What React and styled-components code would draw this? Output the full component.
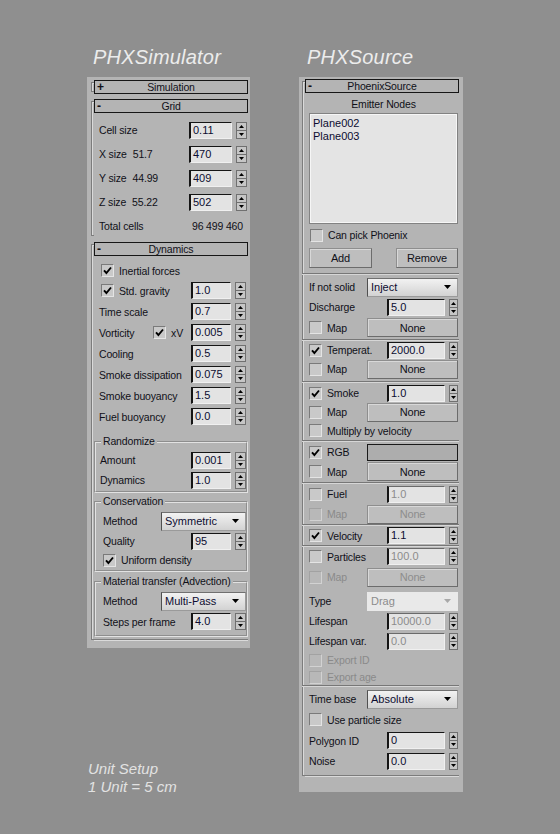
import React from 'react';
import styled, {createGlobalStyle, css} from 'styled-components';

const GlobalStyle = createGlobalStyle`
    html, body {
        margin: 0;
        padding: 0;
        background: #8f8f8f;
    }
    body {
        font-family: "Liberation Sans", Arial, sans-serif;
        font-size: 10.5px;
        letter-spacing: -0.15px;
        color: #101018;
    }
    * { box-sizing: border-box; }
`;

const Page = styled.div`
    display: flex;
    align-items: flex-start;
    gap: 49px;
    padding: 45px 0 0 87px;
    min-height: 834px;
`;

const Column = styled.div`
    display: flex;
    flex-direction: column;
    width: ${props => props.$w}px;
`;

const Title = styled.div`
    font-style: italic;
    font-size: 20px;
    line-height: 24px;
    height: 24px;
    letter-spacing: 0.2px;
    color: #ececec;
    padding-left: ${props => props.$indent}px;
    margin-bottom: 8px;
`;

const Panel = styled.div`
    background: #b4b4b4;
    padding: ${props => props.$pad};
    display: flex;
    flex-direction: column;
`;

const Rollout = styled.div`
    display: grid;
    grid-template-columns: 3px 1fr;
    margin-top: ${props => props.$mt || 0}px;
`;

const Bracket = styled.div`
    grid-column: 1;
    grid-row: 1 / span 2;
    margin-top: 2px;
    margin-bottom: ${props => props.$short ? 2 : 0}px;
    border: 1px solid #7c7c7c;
    border-right: none;
    box-shadow: inset 1px 1px 0 #dadada;
`;

const RollHeader = styled.div`
    grid-column: 2;
    grid-row: 1;
    height: 14px;
    border: 1px solid #161616;
    display: grid;
    grid-template-columns: 14px 1fr 14px;
    align-items: center;
    line-height: 12px;
`;

const Sign = styled.span`
    padding-left: 2px;
    font-weight: bold;
    font-size: 12px;
`;

const HeaderText = styled.span`
    text-align: center;
`;

const RollBody = styled.div`
    grid-column: 2;
    grid-row: 2;
    padding: ${props => props.$pad};
    display: flex;
    flex-direction: column;
    ${props => props.$closed && css`
        border-bottom: 1px solid #7c7c7c;
        box-shadow: 0 1px 0 #dadada;
    `}
`;

const Row = styled.div`
    display: flex;
    align-items: center;
    height: ${props => props.$h || 20}px;
    margin-top: ${props => props.$mt || 0}px;
    padding: 0 ${props => props.$pr || 0}px 0 ${props => props.$pl || 0}px;
    justify-content: ${props => props.$center ? 'center' : props.$between ? 'space-between' : 'flex-start'};
    white-space: nowrap;
`;

const Label = styled.span`
    color: ${props => props.$off ? '#8a8a8a' : '#101018'};
    margin-right: ${props => props.$fill ? 'auto' : '0'};
`;

const Sub = styled.span`
    margin-left: 6px;
`;

const Value = styled.span`
    margin-right: 4px;
`;

const Box = styled.span`
    width: 13px;
    height: 13px;
    flex: none;
    border: 1px solid;
    border-color: ${props => props.$off ? '#a2a2a2 #d2d2d2 #d2d2d2 #a2a2a2' : '#7a7a7a #e4e4e4 #e4e4e4 #7a7a7a'};
    background: ${props => props.$off ? '#b8b8b8' : '#c9c9c9'};
    display: inline-flex;
    align-items: center;
    justify-content: center;
    margin-right: 5px;
`;

const NumBox = styled.div`
    width: ${props => props.$w}px;
    height: 17px;
    background: #e3e3e3;
    border-style: solid;
    border-width: 1px 1px 1px 2px;
    border-color: ${props => props.$off ? '#6a6a6a' : '#151515'} #f0f0f0 #f0f0f0 #151515;
    padding-left: 2px;
    line-height: 15px;
    font-size: 11px;
    letter-spacing: 0;
    color: ${props => props.$off ? '#8c8c8c' : '#0c0c30'};
`;

const Spin = styled.div`
    width: ${props => props.$w}px;
    height: 17px;
    margin-left: ${props => props.$gap}px;
    display: flex;
    flex-direction: column;
    border: 1px solid #707070;
    background: #c6c6c6;
`;

const SpinHalf = styled.div`
    flex: 1;
    display: flex;
    align-items: center;
    justify-content: center;
    & + & {
        border-top: 1px solid #707070;
    }
`;

const FieldWrap = styled.div`
    display: flex;
    align-items: center;
    margin-left: ${props => props.$ml || 0}px;
`;

const Drop = styled.div`
    width: ${props => props.$w}px;
    height: 19px;
    display: flex;
    align-items: center;
    justify-content: space-between;
    padding: 0 6px 0 3px;
    border: 1px solid;
    border-color: #707070 #9a9a9a #9a9a9a #505050;
    background: linear-gradient(#f2f2f2, #d2d2d2);
    font-size: 11px;
    letter-spacing: 0;
    color: #0c0c30;
    ${props => props.$off && css`
        background: #e9e9e9;
        border-color: #e9e9e9;
        color: #8c8c8c;
    `}
`;

const Btn = styled.div`
    width: ${props => props.$w}px;
    height: ${props => props.$h || 19}px;
    display: flex;
    align-items: center;
    justify-content: center;
    border: 1px solid;
    border-color: #8e8e8e #6c6c6c #6c6c6c #8e8e8e;
    background: #bebebe;
    box-shadow: inset 1px 1px 0 #d8d8d8;
    font-size: 11px;
    color: ${props => props.$off ? '#8d8d8d' : '#101018'};
`;

const Swatch = styled.div`
    width: 91px;
    height: 17px;
    border: 1px solid #1a1a1a;
    background: #adadad;
`;

const Group = styled.fieldset`
    margin: ${props => props.$mt}px 0 0 0;
    padding: ${props => props.$pt}px 0 ${props => props.$pb}px ${props => props.$pl}px;
    border: 2px groove #e2e2e2;
    min-width: 0;
`;

// legend sits inside the fieldset padding, so pull it back to a fixed x
const Legend = styled.legend`
    padding: 0 2px;
    margin-left: ${props => 5 - props.$pl}px;
    line-height: 13px;
    font-size: 10.5px;
`;

const ListBox = styled.div`
    width: 149px;
    height: 111px;
    background: #e4e4e4;
    border: 1px solid #828282;
    box-shadow: inset 0 0 0 1px #f6f6f6;
    padding: 3px 3px;
    font-size: 11px;
    line-height: 13px;
    letter-spacing: 0;
    color: #0c0c30;
`;

const Sep = styled.div`
    height: 2px;
    flex: none;
    margin: ${props => props.$mt || 0}px -1px 0 -7px;
    border-top: 1px solid #777777;
    border-bottom: 1px solid #d6d6d6;
`;

const UnitNote = styled.div`
    margin-top: 112px;
    padding-left: 1px;
    font-style: italic;
    font-size: 15px;
    line-height: 18px;
    letter-spacing: 0;
    color: #e2e2e2;
`;

const Tri = ({up, color = '#000'}) => (
    <svg width="5" height="3" viewBox="0 0 5 3">
        <path d={up ? 'M0 3 L2.5 0 L5 3 Z' : 'M0 0 L5 0 L2.5 3 Z'} fill={color}/>
    </svg>
);

const Check = ({on, off}) => (
    <Box $off={off}>
        {on && (
            <svg width="9" height="9" viewBox="0 0 9 9">
                <path d="M1 4.3 L3.4 7 L8 1.5" stroke="#000" strokeWidth="1.9" fill="none"/>
            </svg>
        )}
    </Box>
);

const Field = ({value, w = 40, sw = 11, gap = 4, off, ml}) => (
    <FieldWrap $ml={ml}>
        <NumBox $w={w} $off={off}>{value}</NumBox>
        <Spin $w={sw} $gap={gap}>
            <SpinHalf><Tri up/></SpinHalf>
            <SpinHalf><Tri/></SpinHalf>
        </Spin>
    </FieldWrap>
);

const Dropdown = ({value, w, off}) => (
    <Drop $w={w} $off={off}>
        <span>{value}</span>
        <svg width="7" height="4" viewBox="0 0 7 4">
            <path d="M0 0 L7 0 L3.5 4 Z" fill={off ? '#a8a8a8' : '#000'}/>
        </svg>
    </Drop>
);

const FieldGroup = ({title, mt, pt, pb, pl, children}) => (
    <Group $mt={mt} $pt={pt} $pb={pb} $pl={pl}>
        <Legend $pl={pl}>{title}</Legend>
        {children}
    </Group>
);

// right panel: checkbox + label + None button
const MapRow = ({h, off, mt}) => (
    <Row $h={h} $mt={mt}>
        <Check off={off}/>
        <Label $fill $off={off}>Map</Label>
        <Btn $w={91} $off={off}>None</Btn>
    </Row>
);

const RField = props => <Field w={58} sw={9} gap={4} {...props}/>;

const PHXSimulator = () => (
    <Column $w={163}>
        <Title $indent={6}>PHXSimulator</Title>
        <Panel $pad="3px 2px 8px 4px">
            <Rollout>
                <Bracket $short/>
                <RollHeader><Sign>+</Sign><HeaderText>Simulation</HeaderText></RollHeader>
            </Rollout>

            <Rollout $mt={5}>
                <Bracket $short/>
                <RollHeader><Sign>-</Sign><HeaderText>Grid</HeaderText></RollHeader>
                <RollBody $pad="5px 1px 0 5px">
                    <Row $h={24}><Label $fill>Cell size</Label><Field value="0.11" w={43}/></Row>
                    <Row $h={24}><Label $fill>X size<Sub>51.7</Sub></Label><Field value="470" w={43}/></Row>
                    <Row $h={24}><Label $fill>Y size<Sub>44.99</Sub></Label><Field value="409" w={43}/></Row>
                    <Row $h={24}><Label $fill>Z size<Sub>55.22</Sub></Label><Field value="502" w={43}/></Row>
                    <Row $h={24}><Label $fill>Total cells</Label><Value>96 499 460</Value></Row>
                </RollBody>
            </Rollout>

            <Rollout $mt={4}>
                <Bracket/>
                <RollHeader><Sign>-</Sign><HeaderText>Dynamics</HeaderText></RollHeader>
                <RollBody $pad="5px 0 2px 0" $closed>
                    <Row $h={19} $pl={7}><Check on/><Label>Inertial forces</Label></Row>
                    <Row $h={21} $pl={7} $pr={2}><Check on/><Label $fill>Std. gravity</Label><Field value="1.0"/></Row>
                    <Row $h={21} $pl={5} $pr={2}><Label $fill>Time scale</Label><Field value="0.7"/></Row>
                    <Row $h={21} $pl={5} $pr={2}>
                        <Label $fill>Vorticity</Label>
                        <Check on/><Label>xV</Label>
                        <Field value="0.005" ml={8}/>
                    </Row>
                    <Row $h={21} $pl={5} $pr={2}><Label $fill>Cooling</Label><Field value="0.5"/></Row>
                    <Row $h={21} $pl={5} $pr={2}><Label $fill>Smoke dissipation</Label><Field value="0.075"/></Row>
                    <Row $h={21} $pl={5} $pr={2}><Label $fill>Smoke buoyancy</Label><Field value="1.5"/></Row>
                    <Row $h={21} $pl={5} $pr={2}><Label $fill>Fuel buoyancy</Label><Field value="0.0"/></Row>

                    <FieldGroup title="Randomize" mt={8} pt={2} pb={1} pl={4}>
                        <Row><Label $fill>Amount</Label><Field value="0.001"/></Row>
                        <Row><Label $fill>Dynamics</Label><Field value="1.0"/></Row>
                    </FieldGroup>

                    <FieldGroup title="Conservation" mt={2} pt={3} pb={1} pl={7}>
                        <Row><Label $fill>Method</Label><Dropdown value="Symmetric" w={85}/></Row>
                        <Row><Label $fill>Quality</Label><Field value="95"/></Row>
                        <Row $h={18}><Check on/><Label>Uniform density</Label></Row>
                    </FieldGroup>

                    <FieldGroup title="Material transfer (Advection)" mt={3} pt={3} pb={3} pl={7}>
                        <Row><Label $fill>Method</Label><Dropdown value="Multi-Pass" w={85}/></Row>
                        <Row $h={21}><Label $fill>Steps per frame</Label><Field value="4.0"/></Row>
                    </FieldGroup>
                </RollBody>
            </Rollout>
        </Panel>
        <UnitNote>
            Unit Setup<br/>
            1 Unit = 5 cm
        </UnitNote>
    </Column>
);

const PHXSource = () => (
    <Column $w={164}>
        <Title $indent={8}>PHXSource</Title>
        <Panel $pad="2px 4px 16px 3px">
            <Rollout>
                <Bracket/>
                <RollHeader><Sign>-</Sign><HeaderText>PhoenixSource</HeaderText></RollHeader>
                <RollBody $pad="0 1px 4px 4px" $closed>
                    <Row $h={18} $mt={2} $center>Emitter Nodes</Row>
                    <ListBox>
                        <div>Plane002</div>
                        <div>Plane003</div>
                    </ListBox>
                    <Row $h={18} $mt={2} $pl={1}><Check/><Label>Can pick Phoenix</Label></Row>
                    <Row $h={20} $mt={4} $between>
                        <Btn $w={63} $h={20}>Add</Btn>
                        <Btn $w={62} $h={20}>Remove</Btn>
                    </Row>
                    <Sep $mt={5}/>

                    <Row $mt={2}><Label $fill>If not solid</Label><Dropdown value="Inject" w={91}/></Row>
                    <Row><Label $fill>Discharge</Label><RField value="5.0"/></Row>
                    <MapRow h={21}/>
                    <Sep $mt={1}/>

                    <Row $h={18}><Check on/><Label $fill>Temperat.</Label><RField value="2000.0"/></Row>
                    <MapRow h={20}/>
                    <Sep $mt={2}/>

                    <Row><Check on/><Label $fill>Smoke</Label><RField value="1.0"/></Row>
                    <MapRow h={18}/>
                    <Row $h={19}><Check/><Label>Multiply by velocity</Label></Row>
                    <Sep/>

                    <Row><Check on/><Label $fill>RGB</Label><Swatch/></Row>
                    <MapRow h={19}/>
                    <Sep $mt={1}/>

                    <Row><Check/><Label $fill>Fuel</Label><RField value="1.0" off/></Row>
                    <MapRow h={20} off/>
                    <Sep/>

                    <Row $h={19}><Check on/><Label $fill>Velocity</Label><RField value="1.1"/></Row>
                    <Sep/>

                    <Row $h={19}><Check/><Label $fill>Particles</Label><RField value="100.0" off/></Row>
                    <MapRow h={22} off/>
                    <Row $mt={3}><Label $fill>Type</Label><Dropdown value="Drag" w={91} off/></Row>
                    <Row><Label $fill>Lifespan</Label><RField value="10000.0" off/></Row>
                    <Row><Label $fill>Lifespan var.</Label><RField value="0.0" off/></Row>
                    <Row $h={18}><Check off/><Label $off>Export ID</Label></Row>
                    <Row $h={16}><Check off/><Label $off>Export age</Label></Row>
                    <Sep/>

                    <Row $mt={2}><Label $fill>Time base</Label><Dropdown value="Absolute" w={91}/></Row>
                    <Row $h={21}><Check/><Label>Use particle size</Label></Row>
                    <Row $h={21}><Label $fill>Polygon ID</Label><RField value="0"/></Row>
                    <Row><Label $fill>Noise</Label><RField value="0.0"/></Row>
                </RollBody>
            </Rollout>
        </Panel>
    </Column>
);

const App = () => (
    <>
        <GlobalStyle/>
        <Page>
            <PHXSimulator/>
            <PHXSource/>
        </Page>
    </>
);

export default App;
